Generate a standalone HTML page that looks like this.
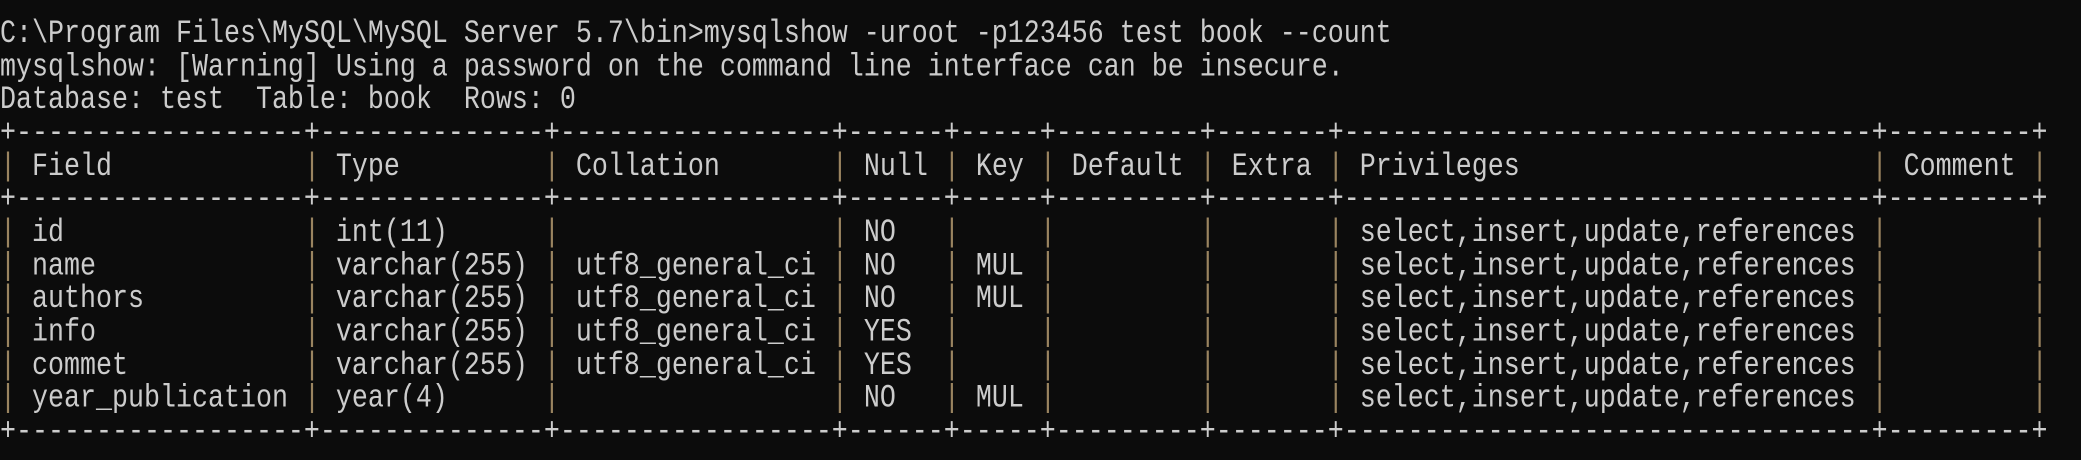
<!DOCTYPE html>
<html><head><meta charset="utf-8"><style>
html,body{margin:0;padding:0;background:#0c0c0c;width:2081px;height:460px;overflow:hidden}
pre{margin:0;position:absolute;left:0;top:19px;font-family:"Liberation Mono",monospace;font-size:26.66px;line-height:27.67px;color:#cccccc;transform:scaleY(1.2);transform-origin:0 0;white-space:pre}
.b{color:#9a8460}
</style></head><body><pre>C:\Program Files\MySQL\MySQL Server 5.7\bin&gt;mysqlshow -uroot -p123456 test book --count
mysqlshow: [Warning] Using a password on the command line interface can be insecure.
Database: test  Table: book  Rows: 0
+------------------+--------------+-----------------+------+-----+---------+-------+---------------------------------+---------+
<span class="b">|</span> Field            <span class="b">|</span> Type         <span class="b">|</span> Collation       <span class="b">|</span> Null <span class="b">|</span> Key <span class="b">|</span> Default <span class="b">|</span> Extra <span class="b">|</span> Privileges                      <span class="b">|</span> Comment <span class="b">|</span>
+------------------+--------------+-----------------+------+-----+---------+-------+---------------------------------+---------+
<span class="b">|</span> id               <span class="b">|</span> int(11)      <span class="b">|</span>                 <span class="b">|</span> NO   <span class="b">|</span>     <span class="b">|</span>         <span class="b">|</span>       <span class="b">|</span> select,insert,update,references <span class="b">|</span>         <span class="b">|</span>
<span class="b">|</span> name             <span class="b">|</span> varchar(255) <span class="b">|</span> utf8_general_ci <span class="b">|</span> NO   <span class="b">|</span> MUL <span class="b">|</span>         <span class="b">|</span>       <span class="b">|</span> select,insert,update,references <span class="b">|</span>         <span class="b">|</span>
<span class="b">|</span> authors          <span class="b">|</span> varchar(255) <span class="b">|</span> utf8_general_ci <span class="b">|</span> NO   <span class="b">|</span> MUL <span class="b">|</span>         <span class="b">|</span>       <span class="b">|</span> select,insert,update,references <span class="b">|</span>         <span class="b">|</span>
<span class="b">|</span> info             <span class="b">|</span> varchar(255) <span class="b">|</span> utf8_general_ci <span class="b">|</span> YES  <span class="b">|</span>     <span class="b">|</span>         <span class="b">|</span>       <span class="b">|</span> select,insert,update,references <span class="b">|</span>         <span class="b">|</span>
<span class="b">|</span> commet           <span class="b">|</span> varchar(255) <span class="b">|</span> utf8_general_ci <span class="b">|</span> YES  <span class="b">|</span>     <span class="b">|</span>         <span class="b">|</span>       <span class="b">|</span> select,insert,update,references <span class="b">|</span>         <span class="b">|</span>
<span class="b">|</span> year_publication <span class="b">|</span> year(4)      <span class="b">|</span>                 <span class="b">|</span> NO   <span class="b">|</span> MUL <span class="b">|</span>         <span class="b">|</span>       <span class="b">|</span> select,insert,update,references <span class="b">|</span>         <span class="b">|</span>
+------------------+--------------+-----------------+------+-----+---------+-------+---------------------------------+---------+</pre></body></html>
